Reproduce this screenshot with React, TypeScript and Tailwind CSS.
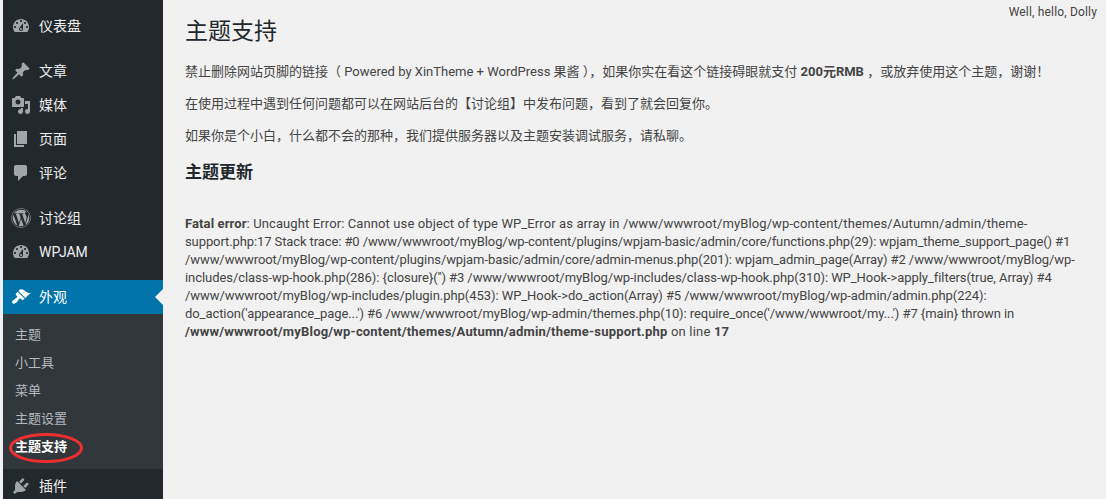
import React from "react";
import { FaWordpress } from "react-icons/fa";

const paths = {
  dash: "M3.76 16h12.48c1.1-1.37 1.76-3.11 1.76-5 0-4.42-3.58-8-8-8s-8 3.58-8 8c0 1.89.66 3.63 1.76 5zM10 4c.55 0 1 .45 1 1s-.45 1-1 1-1-.45-1-1 .45-1 1-1zM6 6c.55 0 1 .45 1 1s-.45 1-1 1-1-.45-1-1 .45-1 1-1zm8 0c.55 0 1 .45 1 1s-.45 1-1 1-1-.45-1-1 .45-1 1-1zm-5.37 5.55L12 7v6c0 1.1-.9 2-2 2s-2-.9-2-2c0-.57.24-1.08.63-1.45zM4 10c.55 0 1 .45 1 1s-.45 1-1 1-1-.45-1-1 .45-1 1-1zm12 0c.55 0 1 .45 1 1s-.45 1-1 1-1-.45-1-1 .45-1 1-1zm-5 3c0-.55-.45-1-1-1s-1 .45-1 1 .45 1 1 1 1-.45 1-1z",
  pin: "M10.44 3.02l1.82-1.82 6.36 6.35-1.83 1.82c-1.05-.68-2.48-.57-3.41.36l-.75.75c-.92.93-1.04 2.35-.35 3.41l-1.83 1.82-2.41-2.41-2.8 2.79c-.42.42-3.38 2.71-3.8 2.29s1.86-3.39 2.28-3.81l2.79-2.79L4.1 9.36l1.83-1.82c1.05.69 2.48.57 3.4-.36l.75-.75c.93-.92 1.05-2.35.36-3.41z",
  media: "M13 11V4c0-.55-.45-1-1-1h-1.67L9 1H5L3.67 3H2c-.55 0-1 .45-1 1v7c0 .55.45 1 1 1h10c.55 0 1-.45 1-1zM7 4.5c1.38 0 2.5 1.12 2.5 2.5S8.38 9.5 7 9.5 4.5 8.38 4.5 7 5.62 4.5 7 4.5zM14 6h5v10.5c0 1.38-1.12 2.5-2.5 2.5S14 17.88 14 16.5s1.12-2.5 2.5-2.5c.17 0 .34.02.5.05V9h-3V6zm-4 8.05V13h2v3.5c0 1.38-1.12 2.5-2.5 2.5S7 17.88 7 16.5 8.12 14 9.5 14c.17 0 .34.02.5.05z",
  page: "M6 15V2h10v13H6zm-1 1h8v2H3V5h2v11z",
  comment: "M5 2h9c1.1 0 2 .9 2 2v7c0 1.1-.9 2-2 2h-2l-5 5v-5H5c-1.1 0-2-.9-2-2V4c0-1.1.9-2 2-2z",
  brush: "M14.48 11.06L7.41 3.99l1.5-1.5c.5-.56 2.3-.47 3.51.32 1.21.8 1.43 1.28 2.91 2.1 1.18.64 2.45 1.26 4.45.85zm-.71.71L6.7 4.7 4.93 6.47c-.39.39-.39 1.02 0 1.41l1.06 1.06c.39.39.39 1.03 0 1.42-.6.6-1.43 1.11-2.21 1.69-.35.26-.7.53-1.01.84C1.43 13.23.39 14.96 1.6 16.17c1.21 1.21 2.94.17 4.28-1.17.31-.31.58-.66.84-1.01.58-.78 1.09-1.61 1.69-2.21.39-.39 1.03-.39 1.42 0l1.06 1.06c.39.39 1.02.39 1.41 0z",
  plug: "M13.11 4.36L9.87 7.6 8 5.73l3.24-3.24c.35-.34 1.05-.2 1.56.32.52.51.66 1.21.31 1.55zm-8 1.77l.91-1.12 9.01 9.01-1.19.84c-.71.71-2.63 1.16-3.82 1.16H6.14L4.9 17.26c-.59.59-1.54.59-2.12 0-.59-.58-.59-1.53 0-2.12l1.24-1.24v-3.88c0-1.13.4-3.19 1.09-3.89zm7.26 3.97l3.24-3.24c.34-.35 1.04-.21 1.55.31.52.51.66 1.21.31 1.55l-3.24 3.25z",
};

function Icon({ d }: { d: string }) {
  return (
    <svg viewBox="0 0 20 20" className="w-5 h-5 fill-current">
      <path d={d} />
    </svg>
  );
}

function Item({ icon, label, active, wp }: { icon?: string; label: string; active?: boolean; wp?: boolean }) {
  return (
    <div className={`relative flex h-[34px] items-center text-[14px] ${active ? "bg-[#0073aa] text-white" : "text-[#eeeeee]"}`}>
      <div className={`w-9 flex justify-center ${active ? "text-white" : "text-[#a0a5aa]"}`}>
        {wp ? <FaWordpress className="w-5 h-5" /> : <Icon d={icon!} />}
      </div>
      <span>{label}</span>
      {active && (
        <span className="absolute right-0 top-[9px] h-0 w-0 border-y-[8px] border-r-[8px] border-y-transparent border-r-[#f1f1f1]" />
      )}
    </div>
  );
}

function Sub({ label, current }: { label: string; current?: boolean }) {
  return (
    <div className={`h-7 flex items-center pl-3 text-[13px] ${current ? "font-bold text-white" : "text-[#b4b9be]"}`}>
      {label}
    </div>
  );
}

export default function App() {
  return (
    <div
      className="relative flex h-[499px] w-[1106px] overflow-hidden bg-[#f1f1f1] pl-[3px] text-[13px] text-[#444444]"
      style={{ fontFamily: 'Roboto, "Noto Sans CJK SC", sans-serif' }}
    >
      <aside className="w-40 shrink-0 bg-[#23282d] pt-[9px]">
        <Item icon={paths.dash} label="仪表盘" />
        <div className="h-[11px]" />
        <Item icon={paths.pin} label="文章" />
        <Item icon={paths.media} label="媒体" />
        <Item icon={paths.page} label="页面" />
        <Item icon={paths.comment} label="评论" />
        <div className="h-[11px]" />
        <Item wp label="讨论组" />
        <Item icon={paths.dash} label="WPJAM" />
        <div className="h-[11px]" />
        <Item icon={paths.brush} label="外观" active />
        <div className="bg-[#32373c] pt-[7px] pb-2">
          <Sub label="主题" />
          <Sub label="小工具" />
          <Sub label="菜单" />
          <Sub label="主题设置" />
          <Sub label="主题支持" current />
        </div>
        <Item icon={paths.plug} label="插件" />
      </aside>

      <main className="flex-1 pl-[22px] pr-2">
        <h1 className="pt-[17px] text-[23px] leading-[29px] text-[#23282d]">主题支持</h1>
        <p className="mt-[16px] leading-[20px]">
          禁止删除网站页脚的链接（ Powered by XinTheme + WordPress 果酱 ），如果你实在看这个链接碍眼就支付 <b>200元RMB</b> ，或放弃使用这个主题，谢谢！
        </p>
        <p className="mt-3 leading-[20px]">在使用过程中遇到任何问题都可以在网站后台的【讨论组】中发布问题，看到了就会回复你。</p>
        <p className="mt-3 leading-[20px]">如果你是个小白，什么都不会的那种，我们提供服务器以及主题安装调试服务，请私聊。</p>
        <h2 className="mt-[14px] text-[17px] leading-[24px] font-bold text-[#23282d]">主题更新</h2>
        <p className="mt-[31px] leading-[18px] whitespace-nowrap">
          <span className="tracking-[0.11px]">
            <b>Fatal error</b>: Uncaught Error: Cannot use object of type WP_Error as array in /www/wwwroot/myBlog/wp-content/themes/Autumn/admin/theme-
          </span>
          <br />
          <span className="tracking-[-0.1px]">
            support.php:17 Stack trace: #0 /www/wwwroot/myBlog/wp-content/plugins/wpjam-basic/admin/core/functions.php(29): wpjam_theme_support_page() #1
          </span>
          <br />
          <span className="tracking-[-0.08px]">
            /www/wwwroot/myBlog/wp-content/plugins/wpjam-basic/admin/core/admin-menus.php(201): wpjam_admin_page(Array) #2 /www/wwwroot/myBlog/wp-
          </span>
          <br />
          <span className="tracking-[-0.06px]">
            includes/class-wp-hook.php(286): {"{closure}"}('') #3 /www/wwwroot/myBlog/wp-includes/class-wp-hook.php(310): WP_Hook-&gt;apply_filters(true, Array) #4
          </span>
          <br />
          <span className="tracking-[-0.05px]">
            /www/wwwroot/myBlog/wp-includes/plugin.php(453): WP_Hook-&gt;do_action(Array) #5 /www/wwwroot/myBlog/wp-admin/admin.php(224):
          </span>
          <br />
          <span className="tracking-[-0.07px]">
            do_action('appearance_page...') #6 /www/wwwroot/myBlog/wp-admin/themes.php(10): require_once('/www/wwwroot/my...') #7 {"{main}"} thrown in
          </span>
          <br />
          <span className="tracking-[0.19px]">
            <b>/www/wwwroot/myBlog/wp-content/themes/Autumn/admin/theme-support.php</b> on line <b>17</b>
          </span>
        </p>
      </main>

      <div className="absolute right-[9px] top-[4px] text-[12px] leading-[16px] tracking-[0.17px] text-[#444444]">Well, hello, Dolly</div>

      <svg className="absolute left-[8px] top-[432px]" width="76" height="32" viewBox="0 0 76 32">
        <ellipse cx="38" cy="16" rx="35.5" ry="13.5" fill="none" stroke="#ef2f2f" strokeWidth="3" />
      </svg>
    </div>
  );
}
